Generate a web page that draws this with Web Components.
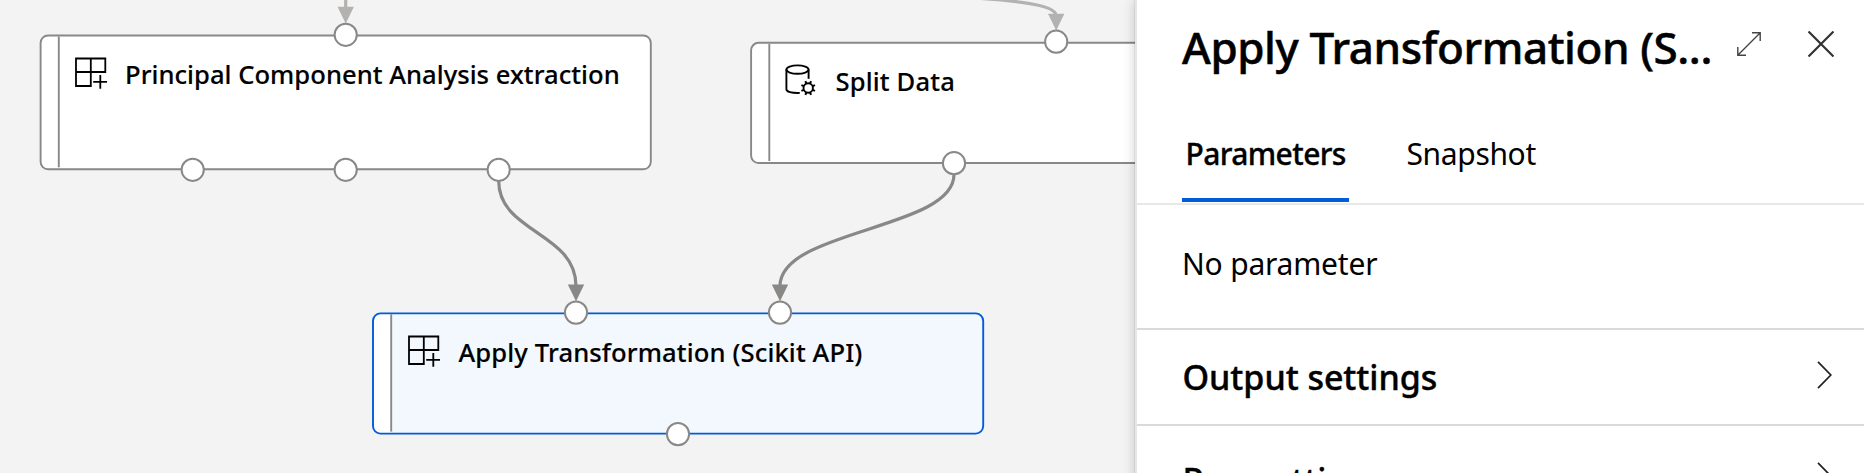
<!DOCTYPE html>
<html lang="en">
<head>
<meta charset="utf-8">
<title>Pipeline designer</title>
<style>
html, body { margin: 0; height: 100%; overflow: hidden; }
body { font-family: "Noto Sans", "Open Sans", sans-serif; color: #000; }
</style>
</head>
<body>
<pipeline-designer>
  <flow-canvas slot="canvas">
    <flow-node x="40.6" y="35.5" w="610.2" h="133.8" icon="module" style="--ls:.02px" ports="345.7,34.8 192.7,169.8 345.7,169.8 498.7,169.8">Principal Component Analysis extraction</flow-node>
    <flow-node x="751.1" y="42.8" w="610.4" h="120.2" icon="data" style="--ls:.15px;--left:34px" ports="1056.2,41.7 954,163.2">Split Data</flow-node>
    <flow-node selected x="373" y="313.4" w="610.2" h="120.2" icon="module" style="--ls:.11px;--left:35px" ports="576,312.6 780,312.6 678,434.1">Apply Transformation (Scikit API)</flow-node>
  </flow-canvas>
  <detail-panel slot="panel">
    <span slot="title">Apply Transformation (S...</span>
    <panel-tab slot="tabs" active>Parameters</panel-tab>
    <panel-tab slot="tabs">Snapshot</panel-tab>
    <span slot="body">No parameter</span>
    <settings-row slot="rows">Output settings</settings-row>
    <settings-row slot="rows" style="--pad:5px;--drop:4px">Run settings</settings-row>
  </detail-panel>
</pipeline-designer>
<script>
const define = (name, html) => customElements.define(name, class extends HTMLElement {
  connectedCallback() {
    if (this.shadowRoot) return;
    this.attachShadow({ mode: 'open' }).innerHTML = typeof html === 'function' ? html(this) : html;
  }
});

const ICONS = {
  module: `<svg width="32" height="32" viewBox="0 0 32 32" fill="none" stroke="#000" stroke-width="1.8">
    <path d="M1 1.5H30.3V15H1ZM15.8 1.5V29H1V15"/><path d="M18.2 24.8H32M25.3 18V31.8"/></svg>`,
  data: `<svg width="32" height="32" viewBox="0 0 32 32" fill="none" stroke="#000" stroke-width="1.9">
    <ellipse cx="12.5" cy="5.6" rx="11.1" ry="4.2"/><path d="M1.4 5.6V25.2C1.4 27.8 6.5 29.2 14.8 28.9"/>
    <path d="M23.6 5.6V14.8"/><circle cx="23.2" cy="24" r="4.7"/>
    <path d="M25 19.66L26.03 17.18M27.54 22.2L30.02 21.17M27.54 25.8L30.02 26.83M25 28.34L26.03 30.82M21.4 28.34L20.37 30.82M18.86 25.8L16.38 26.83M18.86 22.2L16.38 21.17M21.4 19.66L20.37 17.18" stroke-width="2"/></svg>`
};

define('pipeline-designer', `<style>
  :host { display: grid; grid-template-columns: 1135px 1fr; height: 100vh; overflow: hidden; }
  slot { display: contents; }
</style><slot name="canvas"></slot><slot name="panel"></slot>`);

define('flow-canvas', `<style>
  :host { display: block; position: relative; overflow: hidden; background: #f3f3f3; min-width: 0; }
  svg { position: absolute; left: 0; top: 0; }
</style>
<svg width="1135" height="473" fill="none" stroke-width="3.2">
  <g stroke="#b3b2b0"><path d="M345.7 -2V8"/><path d="M980 -1.5C1012 .5 1055 4.5 1056 15"/></g>
  <g fill="#b3b2b0"><path d="M337.5 6.8H353.9L345.7 23.5Z"/><path d="M1048 13.8H1064.4L1056.2 30.5Z"/></g>
  <g stroke="#8a8886"><path d="M498.7 181C498.7 232.5 576 232.5 576 286"/><path d="M954 174.5C954 229.5 780 229.5 780 286"/></g>
  <g fill="#8a8886"><path d="M567.8 284.4H584.2L576 301.2Z"/><path d="M771.8 284.4H788.2L780 301.2Z"/></g>
</svg><slot></slot>`);

// The host sits on whole pixels; the fractional part of x and y moves the drawing inside it.
define('flow-node', el => {
  const a = k => +el.getAttribute(k), x = a('x'), y = a('y'), w = a('w'), h = a('h');
  const left = Math.floor(x), top = Math.floor(y);
  const on = el.hasAttribute('selected');
  const dots = el.getAttribute('ports').split(' ').map(p => {
    const [cx, cy] = p.split(',');
    return `<circle cx="${(cx - x).toFixed(2)}" cy="${(cy - y).toFixed(2)}" r="11.1" fill="#fff" stroke="#8a8886" stroke-width="2"/>`;
  }).join('');
  return `<style>
  :host { position: absolute; left: ${left}px; top: ${top}px; width: ${w}px; height: ${h}px; }
  svg.box { position: absolute; left: 0; top: 0; overflow: visible; }
  .head { position: relative; display: flex; gap: 18.5px; padding: 22px 0 0 var(--left, 34.5px); }
  .head svg { flex: none; }
  .name { padding-top: 1.5px; font-size: 25.6px; font-weight: 500; line-height: 32px; white-space: nowrap; letter-spacing: var(--ls, 0); -webkit-text-stroke: .15px #000; }
  </style>
  <svg class="box" width="${w}" height="${h}"><g transform="translate(${(x - left).toFixed(2)} ${(y - top).toFixed(2)})">
    <rect width="${w}" height="${h}" rx="7.5" fill="${on ? '#f2f8fd' : '#fff'}"/>
    ${on ? `<path d="M18 0H7.5Q0 0 0 7.5V${h - 7.5}Q0 ${h} 7.5 ${h}H18Z" fill="#fff"/>` : ''}
    <path d="M18.2 1V${h - 2}" stroke="#8a8886" stroke-width="1.9"/>
    <rect width="${w}" height="${h}" rx="7.5" fill="none" stroke="${on ? '#015cda' : '#8a8886'}" stroke-width="1.9"/>
    ${dots}
  </g></svg>
  <div class="head">${ICONS[el.getAttribute('icon')]}<div class="name"><slot></slot></div></div>`;
});

define('detail-panel', `<style>
  :host { display: flex; flex-direction: column; position: relative; background: #fff; border-left: 2px solid #e6e6e6; box-shadow: 0 0 1px rgba(0,0,0,.3), 0 0 12px rgba(0,0,0,.2); }
  header { display: flex; align-items: center; height: 64px; padding: 15px 30px 0 45px; margin-bottom: 45px; }
  h1 { flex: none; width: 555px; margin: 0; font-size: 44px; font-weight: 500; line-height: 60px; letter-spacing: -.42px; white-space: nowrap; -webkit-text-stroke: .5px #000; }
  header svg { flex: none; margin-bottom: 6px; }
  nav { display: flex; gap: 54px; height: 79px; padding-left: 45px; border-bottom: 2px solid #e8e8e8; }
  .body { height: 123px; padding-left: 45px; font-size: 30px; line-height: 117px; letter-spacing: -.2px; }
</style>
<header><h1><slot name="title"></slot></h1>
  <svg width="24" height="24" viewBox="0 0 24 24" fill="none" stroke="#444" stroke-width="1.4"><path d="M1 23L23 1M15 .8H23.2V9M.8 15V23.2H9"/></svg>
  <svg style="margin-left:47px" width="26" height="26" viewBox="0 0 26 26" fill="none" stroke="#333" stroke-width="2.2"><path d="M.5 .5L25.5 25.5M25.5 .5L.5 25.5"/></svg>
</header>
<nav><slot name="tabs"></slot></nav>
<div class="body"><slot name="body"></slot></div>
<slot name="rows"></slot>`);

define('panel-tab', `<style>
  :host { display: block; box-sizing: border-box; height: 78px; padding: 9px 0 0 3.5px; font-size: 30px; line-height: 41px; letter-spacing: -.35px; }
  :host([active]) { width: 167px; border-bottom: 4px solid #015cda; font-weight: 500; letter-spacing: -.6px; -webkit-text-stroke: .35px #000; }
</style><slot></slot>`);

define('settings-row', `<style>
  :host { display: flex; flex: none; justify-content: space-between; align-items: center; height: 94px; padding: var(--pad, 0) 32px 0 45.5px; border-top: 2px solid #dadada; font-size: 34px; font-weight: 500; line-height: 44px; letter-spacing: -.05px; -webkit-text-stroke: .4px #000; }
  span { padding-top: var(--drop, 0); }
  svg { margin-bottom: 5px; }
</style><span><slot></slot></span>
<svg width="15" height="28" viewBox="0 0 15 28" fill="none" stroke="#222" stroke-width="1.7"><path d="M1 .9L13.8 14L1 27.1"/></svg>`);
</script>
</body>
</html>
